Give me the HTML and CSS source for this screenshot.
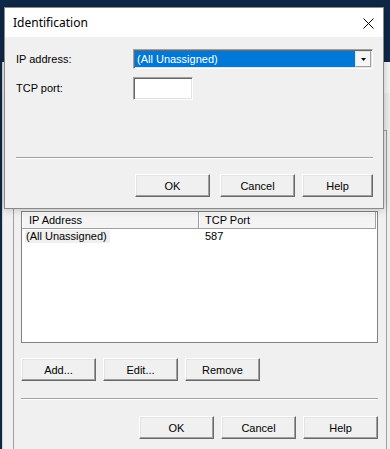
FILE: index.html
```html
<!DOCTYPE html>
<html>
<head>
<meta charset="utf-8">
<link rel="stylesheet" href="styles.css">
</head>
<body>
<div class="desktop">
  <div class="parent">
    <div class="ptitle"></div>
    <div class="pbody">
      <div class="tabpage">
        <div class="listview">
          <div class="lv-head">
            <div class="hcol c1">IP Address</div>
            <div class="hcol c2">TCP Port</div>
          </div>
          <div class="lv-row">
            <div class="cell c1"><span class="sel">(All Unassigned)</span></div>
            <div class="cell c2">587</div>
          </div>
        </div>
        <div class="btnrow actions">
          <button class="btn">Add...</button>
          <button class="btn">Edit...</button>
          <button class="btn">Remove</button>
        </div>
        <div class="sep wide"></div>
        <div class="btnrow end">
          <button class="btn">OK</button>
          <button class="btn">Cancel</button>
          <button class="btn">Help</button>
        </div>
      </div>
    </div>
  </div>

  <div class="dialog">
    <div class="dtitle">
      <span class="dtitle-text">Identification</span>
      <svg class="close" width="11" height="11" viewBox="0 0 11 11"><path d="M0.5 0.5 L10.5 10.5 M10.5 0.5 L0.5 10.5" stroke="#000" stroke-width="1" fill="none"/></svg>
    </div>
    <div class="dbody">
      <div class="form">
        <label class="lbl">IP address:</label>
        <div class="combo">
          <div class="combo-value">(All Unassigned)</div>
          <div class="combo-btn"><svg width="5" height="3" viewBox="0 0 5 3"><path d="M0 0 H5 L2.5 3 Z" fill="#000"/></svg></div>
        </div>
        <label class="lbl">TCP port:</label>
        <div class="textbox"></div>
      </div>
      <div class="sep dsep"></div>
      <div class="btnrow dend">
        <button class="btn">OK</button>
        <button class="btn">Cancel</button>
        <button class="btn narrow">Help</button>
      </div>
    </div>
  </div>
</div>
</body>
</html>
```
FILE: styles.css
```css
html, body {
  margin: 0;
  padding: 0;
}
body {
  width: 390px;
  height: 449px;
  overflow: hidden;
  background: #0e2848;
  font-family: "Liberation Sans", Arial, sans-serif;
  font-size: 11px;
  color: #000;
}
.desktop {
  position: relative;
  width: 390px;
  height: 449px;
  overflow: hidden;
}

/* parent window */
.parent {
  position: absolute;
  left: 2px;
  top: 62px;
  width: 400px;
  height: 420px;
  background: #f0f0f0;
  border-left: 1px solid #d4d4d4;
}
.ptitle {
  height: 31px;
  background: #f7f7f7;
}
.pbody {
  padding: 37px 0 0 10px;
}
.tabpage {
  box-sizing: content-box;
  width: 365px;
  height: 400px;
  border: 1px solid #a0a0a0;
  border-bottom: none;
  padding: 80px 0 0 7px;
}
.listview {
  box-sizing: border-box;
  width: 357px;
  height: 132px;
  background: #fff;
  border: 1px solid #828282;
}
.lv-head {
  display: flex;
  height: 17px;
}
.hcol {
  box-sizing: border-box;
  width: 177px;
  height: 17px;
  line-height: 17px;
  background: #f4f4f4;
  border-right: 1px solid #a0a0a0;
  border-bottom: 1px solid #a0a0a0;
  box-shadow: inset 1px 1px #fff;
}
.hcol.c1 {
  padding-left: 7px;
}
.hcol.c2 {
  padding-left: 6px;
}
.lv-row {
  display: flex;
  height: 15px;
  line-height: 13px;
  padding-top: 1px;
}
.cell {
  box-sizing: border-box;
  width: 177px;
}
.cell.c1 {
  padding-left: 3px;
}
.cell.c2 {
  padding-left: 6px;
}
.sel {
  display: inline-block;
  background: #f0f0f0;
  padding: 0 3px 0 1px;
}

.btnrow {
  display: flex;
  gap: 7px;
}
.actions {
  margin-top: 15px;
}
.end {
  justify-content: flex-end;
  width: 357px;
  margin-top: 16px;
}
.btn {
  box-sizing: border-box;
  width: 75px;
  height: 23px;
  margin: 0;
  padding: 0;
  font-family: "Liberation Sans", Arial, sans-serif;
  font-size: 11px;
  color: #000;
  background: #f0f0f0;
  border: 1px solid;
  border-color: #fff #696969 #696969 #fff;
  box-shadow: inset -1px -1px #a0a0a0, inset 1px 1px #e3e3e3;
  border-radius: 0;
}
.btn.narrow {
  width: 71px;
}
.sep {
  height: 1px;
  border-top: 1px solid #a0a0a0;
  background: #fff;
}
.sep.wide {
  width: 357px;
  margin-top: 17px;
}

/* dialog */
.dialog {
  position: absolute;
  left: 4px;
  top: 7px;
  width: 378px;
  height: 200px;
  border: 1px solid #8a8a8a;
  background: #f0f0f0;
  box-shadow: 0 0 8px rgba(0, 0, 0, 0.25);
}
.dtitle {
  display: flex;
  align-items: center;
  justify-content: space-between;
  height: 29px;
  background: #fff;
  padding: 0 9px 0 8px;
}
.dtitle-text {
  font-family: "Noto Sans", "Liberation Sans", sans-serif;
  font-size: 12px;
  line-height: 16px;
}
.close {
  display: block;
  margin-top: 1px;
}
.dbody {
  box-sizing: border-box;
  height: 171px;
  padding: 12px 10px 11px 11px;
  display: flex;
  flex-direction: column;
}
.form {
  display: grid;
  grid-template-columns: 117px 240px;
  grid-template-rows: 20px 23px;
  row-gap: 8px;
  align-items: center;
}
.lbl {
  line-height: 13px;
}
.combo {
  box-sizing: border-box;
  display: flex;
  width: 240px;
  height: 20px;
  padding: 1px;
  background: #fff;
  border: 1px solid;
  border-color: #a0a0a0 #fff #fff #a0a0a0;
  box-shadow: inset 1px 1px #696969, inset -1px -1px #e3e3e3;
}
.combo-value {
  flex: 1;
  background: #0078d7;
  color: #fff;
  line-height: 16px;
  padding-left: 2px;
}
.combo-btn {
  box-sizing: border-box;
  width: 16px;
  height: 16px;
  display: flex;
  align-items: center;
  justify-content: center;
  background: #f6f6f6;
  border: 1px solid;
  border-color: #e3e3e3 #a0a0a0 #a0a0a0 #e3e3e3;
}
.textbox {
  box-sizing: border-box;
  width: 60px;
  height: 23px;
  background: #fff;
  border: 1px solid;
  border-color: #a0a0a0 #fff #fff #a0a0a0;
  box-shadow: inset 1px 1px #696969, inset -1px -1px #e3e3e3;
}
.dsep {
  width: 357px;
  margin-top: auto;
}
.dend {
  justify-content: flex-end;
  gap: 0;
  width: 357px;
  margin-top: 15px;
}
.dend .btn + .btn {
  margin-left: 7px;
}
.dend .btn:first-child {
  margin-right: 3px;
}
```
